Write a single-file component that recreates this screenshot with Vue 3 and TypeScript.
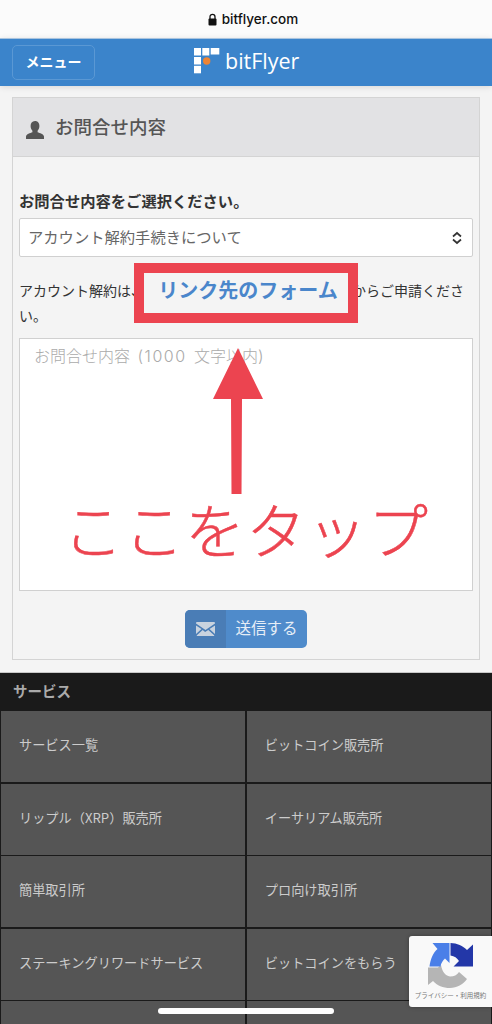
<script setup lang="ts">
const services: string[] = [
  'サービス一覧',
  'ビットコイン販売所',
  'リップル（XRP）販売所',
  'イーサリアム販売所',
  '簡単取引所',
  'プロ向け取引所',
  'ステーキングリワードサービス',
  'ビットコインをもらう',
  '',
  '',
]
</script>

<template>
  <div class="page">
    <div class="addr">
      <svg class="lock" width="9" height="13" viewBox="0 0 9 13">
        <path d="M2 6V3.800a2.500 2.500 0 0 1 5 0V6" fill="none" stroke="#111" stroke-width="1.300" />
        <rect x="0.5" y="5.500" width="8" height="7" rx="1" fill="#111" />
      </svg>
      <span>bitflyer.com</span>
    </div>

    <header class="nav">
      <button class="menu"><span>メニュー</span></button>
      <div class="logo">
        <svg width="26" height="26" viewBox="0 0 26 26">
          <g fill="#fff">
            <rect x="0" y="0" width="7" height="7.500" />
            <rect x="8.300" y="0" width="7" height="7.500" />
            <rect x="16.700" y="0" width="8.600" height="6.500" />
            <rect x="0" y="9" width="7" height="7.500" />
            <rect x="0" y="17.800" width="7" height="7.500" />
          </g>
          <circle cx="12.700" cy="13" r="3.700" fill="#ee8434" />
        </svg>
        <span>bitFlyer</span>
      </div>
    </header>

    <main class="content">
      <section class="panel">
        <h2 class="panel-head">
          <svg width="20" height="20" viewBox="0 0 20 20">
            <path
              fill="#555"
              d="M10 1c3 0 4.400 2.200 4.400 5 0 2-.8 3.600-1.800 4.700v1.500c2 .9 6.400 1.700 6.400 4.300V19H1v-2.500c0-2.600 4.400-3.400 6.400-4.300v-1.500C6.400 9.600 5.600 8 5.600 6c0-2.800 1.400-5 4.400-5z"
            />
          </svg>
          <span class="panel-title">お問合せ内容</span>
        </h2>
        <div class="panel-body">
          <label class="label">お問合せ内容をご選択ください。</label>
          <div class="select">
            <span class="select-text">アカウント解約手続きについて</span>
            <svg width="12" height="14" viewBox="0 0 12 14">
              <path d="M2 5.500 6 2l4 3.500M2 8.500 6 12l4-3.500" fill="none" stroke="#333" stroke-width="1.700" />
            </svg>
          </div>
          <p class="note">
            アカウント解約は、<span class="link-slot"></span>からご申請ください。
          </p>
          <div class="textarea">お問合せ内容 <span class="count">(1000</span> 文字以内)</div>
          <div class="actions">
            <button class="send">
              <span class="send-icon">
                <svg width="19" height="14" viewBox="0 0 19 14">
                  <path fill="#c9d3df" d="M0 1.500 9.500 8 19 1.500V1a1 1 0 0 0-1-1H1a1 1 0 0 0-1 1zM0 3.500V12l5.500-5zM19 3.500V12l-5.500-5zM6.700 7.900 .6 13.600c.1.200.3.400.6.400h16.600c.3 0 .5-.2.600-.4l-6.100-5.700-3.200 2.100z" />
                </svg>
              </span>
              <span class="send-text">送信する</span>
            </button>
          </div>
        </div>
      </section>
    </main>

    <footer class="footer">
      <h3 class="footer-head">サービス</h3>
      <ul class="grid">
        <li v-for="(s, i) in services" :key="i">{{ s }}</li>
      </ul>
    </footer>

    <!-- annotation drawn on top of the screenshot -->
    <div class="mark"><a class="mark-text">リンク先のフォーム</a></div>
    <svg class="arrow" width="50" height="146" viewBox="0 0 50 146">
      <path fill="#ec4450" d="M25 0 50 51H29L28.500 146H18.500L18 51H0z" />
    </svg>
    <div class="tap">ここをタップ</div>

    <div class="recaptcha">
      <svg width="45" height="45" viewBox="0 0 45 45">
        <path fill="#b5b5b5" d="M0 24.500H10L13 22C14 28 17 33 22 33.500C26 33.500 29 32 31 29L39 36C35 41.500 29 45 22 45C15 45 9 42.500 5 38L0 42z" />
        <path fill="#4a7fe8" d="M1.500 23.500H12.500C13 20 15 17.500 17 15.500L21.500 20V0H4.500L9.500 6C5 10 2.500 16 1.500 23.500z" />
        <path fill="#2337a8" d="M22.500 0C29 0 35 3 39 7L45 1.500V23.500H25.500L31 18C29 15 26.500 13 22.500 12.500z" />
      </svg>
      <span>プライバシー・利用規約</span>
    </div>

    <div class="home"></div>
  </div>
</template>

<style>
html,
body {
  margin: 0;
  background: #1a1a1a;
}
</style>

<style scoped>
.page {
  position: relative;
  width: 492px;
  height: 1024px;
  overflow: hidden;
  background: #f4f4f4;
  font-family: 'Noto Sans CJK JP', 'Noto Sans', sans-serif;
  color: #333;
}
.addr {
  height: 38px;
  padding-left: 14px;
  box-sizing: border-box;
  display: flex;
  align-items: center;
  justify-content: center;
  gap: 5px;
  background: #fbfbfb;
  font-family: Inter, 'Liberation Sans', sans-serif;
  font-size: 13.500px;
  font-weight: 500;
  color: #111;
}
.nav {
  position: relative;
  height: 48px;
  padding: 6px 0 0 12px;
  box-sizing: border-box;
  background: #3b84cb;
  box-shadow: 0 1px 6px rgba(0, 0, 0, 0.12);
  border-top: 1px solid #a9c4df;
}
.menu {
  display: block;
  width: 83px;
  height: 35px;
  padding: 0 0 3px;
  border: 1px solid #5a98d4;
  border-radius: 5px;
  background: transparent;
  color: #fff;
  font-family: inherit;
  font-size: 14px;
  font-weight: 700;
}
.logo {
  position: absolute;
  left: 194px;
  top: 9px;
  display: flex;
  align-items: center;
  gap: 5px;
  color: #fff;
  font-family: 'Open Sans', sans-serif;
  font-size: 21.500px;
  line-height: 26px;
}
.content {
  padding: 11px 12px 12px;
}
.panel {
  height: 563px;
  box-sizing: border-box;
  border: 1px solid #d4d4d4;
}
.panel-head {
  height: 59px;
  margin: 0;
  padding-left: 12px;
  box-sizing: border-box;
  display: flex;
  align-items: center;
  gap: 10px;
  background: #e2e2e4;
  border-bottom: 1px solid #d4d4d4;
  color: #555;
  font-size: 18.500px;
  font-weight: 500;
}
.panel-head svg {
  margin-top: 6px;
}
.panel-title {
  margin-bottom: 3px;
}
.panel-body {
  padding: 33px 6px 0;
}
.label {
  display: block;
  font-size: 15.300px;
  font-weight: 700;
  line-height: 20px;
  margin-bottom: 8px;
  color: #333;
}
.select {
  height: 39px;
  padding: 0 9px 0 8px;
  box-sizing: border-box;
  display: flex;
  align-items: center;
  justify-content: space-between;
  background: #fff;
  border: 1px solid #d0d0d0;
  border-radius: 2px;
  color: #666;
  font-size: 15.300px;
}
.select-text {
  margin-bottom: 3px;
}
.note {
  margin: 21px 0 0;
  font-size: 14px;
  line-height: 25px;
  color: #333;
}
.link-slot {
  display: inline-block;
  width: 207px;
}
.textarea {
  height: 253px;
  margin-top: 10px;
  padding: 6px 14px;
  box-sizing: border-box;
  background: #fff;
  border: 1px solid #d0d0d0;
  color: #aaa;
  font-family: Inter, 'Noto Sans CJK JP', sans-serif;
  font-size: 16px;
  font-weight: 300;
  word-spacing: 3px;
  line-height: 22px;
}
.count {
  letter-spacing: 1.500px;
}
.actions {
  display: flex;
  justify-content: center;
  margin-top: 19px;
}
.send {
  display: flex;
  width: 122px;
  height: 38px;
  padding: 0;
  border: 0;
  border-radius: 5px;
  overflow: hidden;
  background: #4f8bcb;
  color: #e6eef7;
  font-family: inherit;
  font-size: 15.500px;
}
.send-icon {
  width: 41px;
  height: 38px;
  display: flex;
  align-items: center;
  justify-content: center;
  background: #4a7db6;
}
.send-text {
  flex: 1;
  line-height: 35px;
  text-align: center;
}
.footer {
  height: 352px;
  box-sizing: border-box;
  background: #1a1a1a;
  border-top: 1px solid #c8c8c8;
}
.footer-head {
  margin: 0;
  height: 38px;
  padding-left: 13px;
  color: #aaa;
  font-size: 14.500px;
  font-weight: 700;
  line-height: 35px;
}
.grid {
  list-style: none;
  margin: 0;
  padding: 0 1px;
  display: grid;
  grid-template-columns: 1fr 1fr;
  grid-auto-rows: 71px;
  gap: 1.600px;
}
.grid li {
  padding-left: 18px;
  background: #555;
  color: #ccc;
  font-size: 13.200px;
  line-height: 68px;
}
.mark {
  position: absolute;
  left: 134px;
  top: 263px;
  width: 224px;
  height: 60px;
  box-sizing: border-box;
  border: 10px solid #ec4450;
  background: #f4f4f4;
  text-align: center;
}
.mark-text {
  display: block;
  margin-top: 2px;
  padding-left: 4px;
  color: #4a86cb;
  font-size: 20px;
  font-weight: 700;
  line-height: 30px;
  white-space: nowrap;
}
.arrow {
  position: absolute;
  left: 213px;
  top: 348px;
}
.tap {
  position: absolute;
  left: 63px;
  top: 488px;
  color: #ec4450;
  font-size: 60px;
  font-weight: 300;
  -webkit-text-stroke: 0.5px #ec4450;
  letter-spacing: 1px;
  line-height: 80px;
  white-space: nowrap;
}
.recaptcha {
  position: absolute;
  left: 409px;
  top: 936px;
  width: 83px;
  height: 71px;
  padding-top: 7px;
  box-sizing: border-box;
  display: flex;
  flex-direction: column;
  align-items: center;
  background: #f9f9f9;
  border-radius: 3px 0 0 3px;
  box-shadow: 0 0 4px rgba(0, 0, 0, 0.3);
}
.recaptcha span {
  margin-top: 2px;
  color: #777;
  font-size: 6.500px;
  white-space: nowrap;
}
.home {
  position: absolute;
  left: 158px;
  top: 1008px;
  width: 176px;
  height: 6px;
  border-radius: 3px;
  background: #fff;
}
</style>
